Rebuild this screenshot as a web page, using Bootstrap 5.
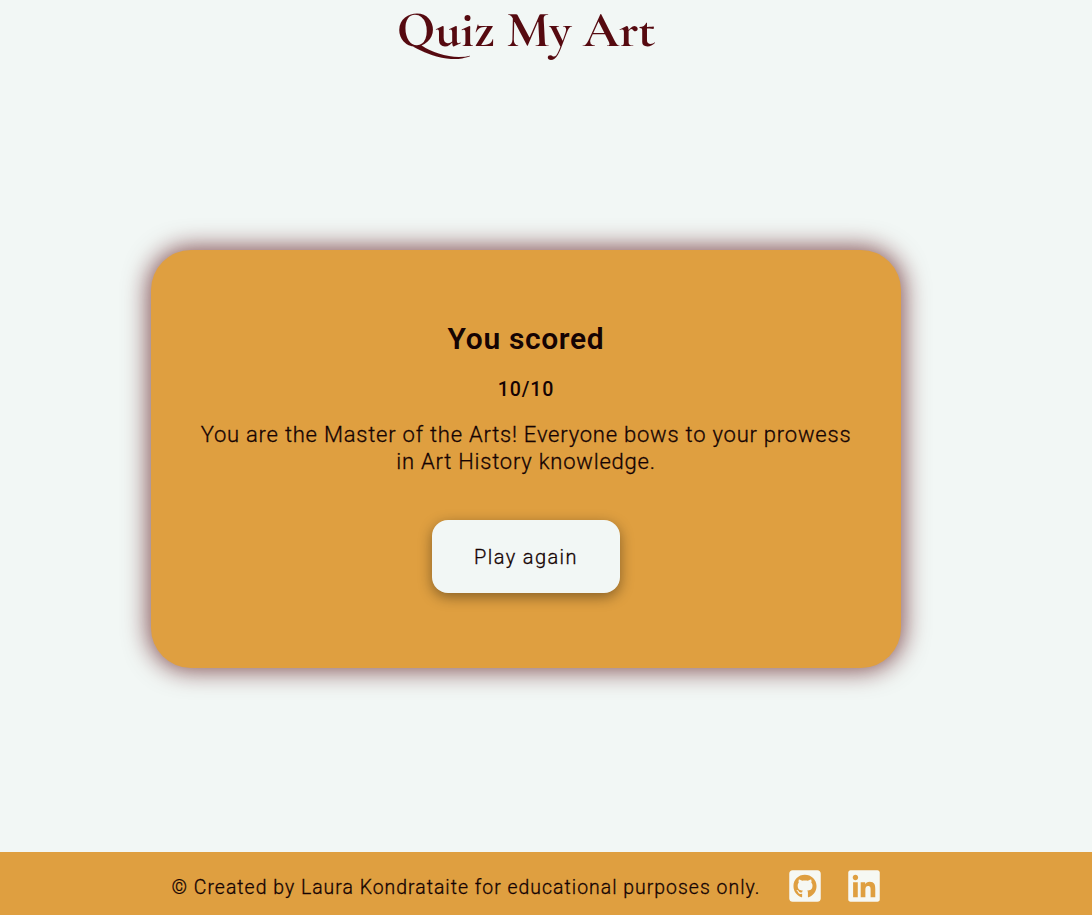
<!DOCTYPE html>
<html lang="en">
<head>
<meta charset="utf-8">
<meta name="viewport" content="width=device-width, initial-scale=1">
<title>Quiz My Art</title>
<link href="https://cdn.jsdelivr.net/npm/bootstrap@5.3.0/dist/css/bootstrap.min.css" rel="stylesheet">
<style>
body{background:#f2f7f5;color:#150303;font-family:Roboto,sans-serif;font-weight:300;letter-spacing:.78px;height:915px;overflow:hidden}
.site-title{font-family:"Cormorant Garamond",Cormorant,"Liberation Serif",serif;font-weight:700;font-size:50.5px;line-height:60px;letter-spacing:0;color:#560a10}
.page-column{width:1052px}
.result{width:750px;height:418px;margin-top:190px;padding:71px 40px 0;background:#df9f40;border-radius:40px;box-shadow:0 0 24px 3px #560a10b0}
.result h1{font-size:30px;line-height:36px;font-weight:600;letter-spacing:.65px;margin-bottom:20px}
.result h2{font-size:19.6px;line-height:26px;font-weight:550;letter-spacing:.9px;margin-bottom:18px}
.result p{font-size:22px;line-height:27px;margin-bottom:45px}
.result p,.btn-again,.footer-note{-webkit-text-stroke:.3px currentColor}
.btn-again{--bs-btn-color:#150303;--bs-btn-bg:#f2f7f5;--bs-btn-hover-bg:#fff;--bs-btn-border-width:0;--bs-btn-font-weight:300;width:188px;height:73px;border-radius:16px;font-size:20px;letter-spacing:1.4px;box-shadow:0 4px 14px rgba(0,0,0,.4)}
.site-footer{background:#df9f40;height:63px;font-size:19.4px;letter-spacing:1.03px}
.site-footer a{color:#f6f8f3}
.site-footer svg{width:32px;height:36px;display:block}
.footer-note{padding-top:9px}
.gh-link{margin:4px 0 0 29px}
.in-link{margin:4px 0 0 27px}
</style>
</head>
<body class="d-flex flex-column">
<header class="page-column text-center"><div class="site-title">Quiz My Art</div></header>
<main class="page-column flex-grow-1 d-flex flex-column align-items-center">
  <section class="result text-center">
    <h1>You scored</h1>
    <h2>10/10</h2>
    <p>You are the Master of the Arts! Everyone bows to your prowess<br>in Art History knowledge.</p>
    <button class="btn btn-again" type="button">Play again</button>
  </section>
</main>
<footer class="site-footer flex-shrink-0">
  <div class="page-column h-100 d-flex justify-content-center align-items-center">
    <span class="footer-note text-nowrap">© Created by Laura Kondrataite for educational purposes only.</span>
    <a class="gh-link" href="#" aria-label="GitHub"><svg viewBox="0 0 448 512" fill="currentColor"><path d="M400 32H48C21.5 32 0 53.5 0 80v352c0 26.5 21.5 48 48 48h352c26.5 0 48-21.5 48-48V80c0-26.5-21.5-48-48-48zM277.3 415.7c-8.4 1.5-11.5-3.7-11.5-8 0-5.4.2-33 .2-55.3 0-15.6-5.2-25.5-11.3-30.7 37-4.1 76-9.2 76-73.1 0-18.2-6.5-27.3-17.1-39 1.7-4.3 7.4-22-1.7-45-13.9-4.3-45.7 17.9-45.7 17.9-13.2-3.7-27.5-5.6-41.6-5.6-14.1 0-28.4 1.9-41.6 5.6 0 0-31.8-22.2-45.7-17.9-9.1 22.9-3.5 40.6-1.7 45-10.6 11.7-15.6 20.8-15.6 39 0 63.6 37.3 69 74.3 73.1-4.8 4.3-9.1 11.7-10.6 22.3-9.5 4.3-33.8 11.7-48.3-13.9-9.1-15.8-25.5-17.1-25.5-17.1-16.2-.2-1.1 10.2-1.1 10.2 10.8 5 18.4 24.2 18.4 24.2 9.7 29.7 56.1 19.7 56.1 19.7 0 13.9.2 36.5.2 40.6 0 4.3-3 9.5-11.5 8-66-22.1-112.2-84.9-112.2-158.3 0-91.8 70.2-161.5 162-161.5S388 165.6 388 257.4c.1 73.4-44.7 136.3-110.7 158.3z"/></svg></a>
    <a class="in-link" href="#" aria-label="LinkedIn"><svg viewBox="0 0 448 512" fill="currentColor"><path d="M416 32H31.9C14.3 32 0 46.5 0 64.3v383.4C0 465.5 14.3 480 31.9 480H416c17.6 0 32-14.5 32-32.3V64.3c0-17.8-14.4-32.3-32-32.3zM135.4 416H69V202.2h66.5V416zm-33.2-243c-21.3 0-38.5-17.3-38.5-38.5S80.9 96 102.2 96c21.2 0 38.5 17.3 38.5 38.5 0 21.3-17.2 38.5-38.5 38.5zm282.1 243h-66.4V312c0-24.8-.5-56.7-34.5-56.7-34.6 0-39.9 27-39.9 54.9V416h-66.4V202.2h63.7v29.2h.9c8.9-16.8 30.6-34.5 62.9-34.5 67.2 0 79.7 44.3 79.7 101.9V416z"/></svg></a>
  </div>
</footer>
<script src="https://cdn.jsdelivr.net/npm/bootstrap@5.3.0/dist/js/bootstrap.bundle.min.js"></script>
</body>
</html>
